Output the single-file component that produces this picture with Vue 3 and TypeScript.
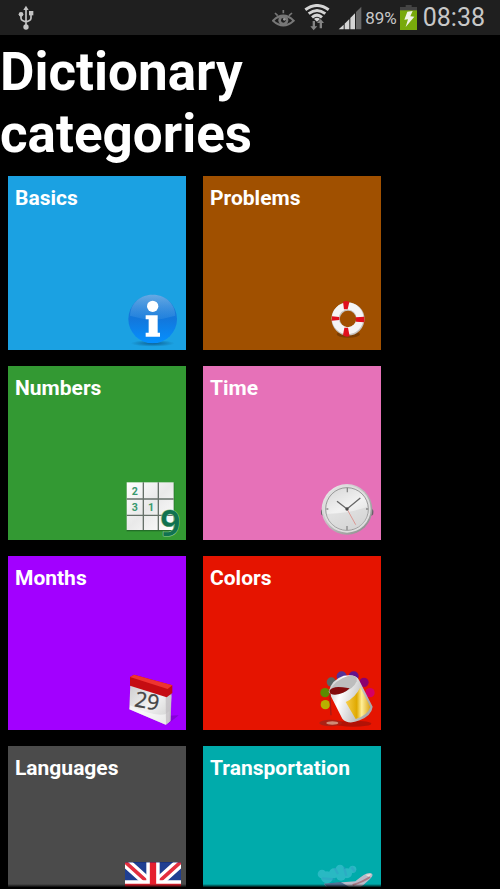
<script setup lang="ts">
interface Category {
  id: string
  label: string
  color: string
}

const categories: Category[] = [
  { id: 'basics', label: 'Basics', color: '#1ba1e2' },
  { id: 'problems', label: 'Problems', color: '#a05000' },
  { id: 'numbers', label: 'Numbers', color: '#339933' },
  { id: 'time', label: 'Time', color: '#e671b8' },
  { id: 'months', label: 'Months', color: '#a200ff' },
  { id: 'colors', label: 'Colors', color: '#e51400' },
  { id: 'languages', label: 'Languages', color: '#4b4b4b' },
  { id: 'transportation', label: 'Transportation', color: '#00abab' },
]
</script>

<template>
  <div class="screen">
    <header class="status">
      <svg class="usb" viewBox="0 0 48 75" aria-hidden="true">
        <g fill="none" stroke="#c4c4c4" stroke-width="5">
          <path d="M24 8V66M9 28V40Q9 45 15 47L24 51M39 24V40Q39 45 33 47L24 51" />
        </g>
        <g fill="#c4c4c4">
          <path d="M24 2L32 15H16Z" />
          <circle cx="9" cy="28" r="7" />
          <rect x="33" y="18" width="13" height="13" />
          <circle cx="24" cy="66" r="8" />
        </g>
      </svg>
      <div class="indicators">
        <svg class="eye" viewBox="0 0 69 60" aria-hidden="true">
          <g fill="none" stroke="#777" stroke-width="6">
            <path d="M3 38Q34 8 65 38Q34 66 3 38Z" />
            <path d="M9 15L17 23M34 6V16M60 15L51 23" stroke-width="5" />
          </g>
          <circle cx="34" cy="37" r="15" fill="#777" />
          <circle cx="34" cy="37" r="7" fill="#1f1f1f" />
          <circle cx="37" cy="34" r="4" fill="#999" />
        </svg>
        <svg class="wifi" viewBox="0 0 78 81" aria-hidden="true">
          <g fill="none" stroke="#d4d4d4" stroke-width="9">
            <path d="M4 17Q39 -8 74 17M14 29Q39 10 64 29M24 40Q39 27 54 40" />
          </g>
          <path d="M30 45Q39 38 48 45L39 53Z" fill="#d4d4d4" />
          <g fill="#858585">
            <path d="M26 51H33V67H40L29 79L19 67H26Z" />
            <path d="M47 73H54V57H60L50 45L39 57H47Z" />
          </g>
        </svg>
        <svg class="signal" viewBox="0 0 72 72" aria-hidden="true">
          <path d="M2 70L17 56V70Z" fill="#d4d4d4" />
          <path d="M20 53L34 39V70H20Z" fill="#d4d4d4" />
          <path d="M37 36L51 22V70H37Z" fill="#d4d4d4" />
          <path d="M54 18L70 2V70H54Z" fill="#666" />
        </svg>
        <span class="percent">89%</span>
        <svg class="battery" viewBox="0 0 51 75" aria-hidden="true">
          <rect x="17" width="18" height="7" fill="#444" />
          <rect y="6" width="51" height="69" fill="#444" />
          <rect y="16" width="51" height="59" fill="#78aa0b" />
          <path d="M22 20L38 18L31 34L43 35L17 66L24 43L13 44Z" fill="#f0f3e7" />
        </svg>
        <time class="clock">08:38</time>
      </div>
    </header>

    <main class="content">
      <h1>Dictionary categories</h1>
      <nav class="tiles" aria-label="Dictionary categories">
        <a
          v-for="c in categories"
          :key="c.id"
          class="tile"
          :href="'#' + c.id"
          :style="{ backgroundColor: c.color }"
        >
          <span class="label">{{ c.label }}</span>

          <svg class="icon" viewBox="0 0 198 195" aria-hidden="true">
            <g v-if="c.id === 'basics'">
              <defs>
                <linearGradient id="ball" x2="0" y2="1">
                  <stop offset="0" stop-color="#2079cf" />
                  <stop offset=".5" stop-color="#1277dc" />
                  <stop offset="1" stop-color="#0590ff" />
                </linearGradient>
                <linearGradient id="gloss" x2="0" y2="1">
                  <stop offset="0" stop-color="#8fc4ee" stop-opacity=".65" />
                  <stop offset="1" stop-color="#4c9fe6" stop-opacity=".25" />
                </linearGradient>
                <radialGradient id="shade">
                  <stop offset="0" stop-color="#08456f" stop-opacity=".7" />
                  <stop offset="1" stop-color="#08456f" stop-opacity="0" />
                </radialGradient>
              </defs>
              <ellipse cx="98" cy="175" rx="66" ry="10" fill="url(#shade)" />
              <circle cx="98" cy="102" r="73" fill="url(#ball)" />
              <path d="M30 92C34 8 162 8 166 92Q98 114 30 92Z" fill="url(#gloss)" />
              <circle cx="98" cy="64" r="17" fill="#fff" />
              <path d="M77 91H113V143H120V155H77V143H86V103H77Z" fill="#fff" />
            </g>

            <g v-else-if="c.id === 'problems'">
              <ellipse cx="100" cy="148" rx="35" ry="10" fill="#5e2d00" opacity=".55" />
              <circle cx="99" cy="102" r="37" fill="none" stroke="#c5c1bd" stroke-width="25" />
              <circle cx="98" cy="100" r="37" fill="none" stroke="#f5f5f5" stroke-width="21" />
              <g fill="#e00f1d">
                <path d="M84 50Q94 45 103 51L98 73H87Z" />
                <path d="M51 94L73 96V105L50 107Z" />
                <path d="M122 97L148 95V112L123 110Z" />
                <path d="M88 128H99L104 154Q93 158 84 151Z" />
              </g>
            </g>

            <g v-else-if="c.id === 'numbers'">
              <defs>
                <linearGradient id="cells" x2="1" y2="1">
                  <stop offset="0" stop-color="#fff" />
                  <stop offset=".5" stop-color="#e9e9e9" />
                  <stop offset="1" stop-color="#fff" />
                </linearGradient>
              </defs>
              <rect x="20" y="24" width="143" height="145" fill="#236f28" />
              <rect x="20" y="22" width="141" height="143" fill="url(#cells)" />
              <path d="M70 22V165M115 22V165M20 72H161M20 121H161" stroke="#667069" stroke-width="4" />
              <g class="digits" fill="#39996e">
                <text x="35" y="59" font-size="32">2</text>
                <text x="35" y="108" font-size="32">3</text>
                <text x="84" y="108" font-size="32">1</text>
              </g>
              <text class="nine" x="121" y="182" font-size="106" fill="#107250" stroke="#8fc79a" stroke-width="3" paint-order="stroke">9</text>
            </g>

            <g v-else-if="c.id === 'time'">
              <defs>
                <linearGradient id="rim" x2="1" y2="1">
                  <stop offset="0" stop-color="#f7f7f7" />
                  <stop offset=".5" stop-color="#bbb" />
                  <stop offset="1" stop-color="#858585" />
                </linearGradient>
                <linearGradient id="face" x2=".5" y2="1">
                  <stop offset="0" stop-color="#d5d5d5" />
                  <stop offset=".55" stop-color="#f2f2f2" />
                  <stop offset="1" stop-color="#ddd" />
                </linearGradient>
              </defs>
              <rect x="18" y="101" width="157" height="21" rx="8" fill="#686068" />
              <circle cx="96" cy="103" r="76" fill="url(#rim)" />
              <circle cx="96" cy="102" r="71" fill="#dedede" />
              <circle cx="96" cy="102" r="64" fill="url(#face)" stroke="#999" stroke-width="3" />
              <path d="M34 116Q95 118 158 95Q163 160 96 165Q43 160 34 116Z" fill="#d0d0d0" opacity=".5" />
              <path d="M97 38V52M96 153V165M34 102H40M153 102H159" stroke="#888" stroke-width="4" />
              <path d="M96 102L122 149" stroke="#dc9792" stroke-width="3" />
              <path d="M66 79L96 102L136 69" fill="none" stroke="#666" stroke-width="4" />
              <circle cx="96" cy="102" r="5" fill="#484848" />
            </g>

            <g v-else-if="c.id === 'months'">
              <defs>
                <linearGradient id="paper" x2="1" y2="1">
                  <stop offset="0" stop-color="#ccc" />
                  <stop offset=".5" stop-color="#f2f2f2" />
                  <stop offset="1" stop-color="#cacaca" />
                </linearGradient>
              </defs>
              <path d="M145 152L176 151L145 176Z" fill="#7200bd" opacity=".6" />
              <path d="M31 56L144 88L154 91L151 168L137 179L28 133Z" fill="url(#paper)" />
              <path d="M31 121Q91 154 136 148L148 138V171L137 179L28 133Z" fill="#fff" opacity=".55" />
              <path d="M137 91L155 83L152 168L138 179Z" fill="#bdb9bd" opacity=".7" />
              <path d="M30 36L42 29L157 61V84L140 97L30 62Z" fill="#c50c12" />
              <path d="M30 36L42 29L157 61L143 72Z" fill="#ee3430" />
              <text class="date" x="41" y="124" font-size="64" fill="#454545" stroke="#454545" stroke-width="1" transform="rotate(10 41 124)">29</text>
            </g>

            <g v-else-if="c.id === 'colors'">
              <defs>
                <linearGradient id="can" x2="1" y2=".3">
                  <stop offset="0" stop-color="#bbb" />
                  <stop offset=".35" stop-color="#fff" />
                  <stop offset="1" stop-color="#aaa" />
                </linearGradient>
                <linearGradient id="gold" x2="1">
                  <stop offset="0" stop-color="#f8cf4c" />
                  <stop offset=".45" stop-color="#dfa900" />
                  <stop offset=".65" stop-color="#fff099" />
                  <stop offset="1" stop-color="#d9a315" />
                </linearGradient>
              </defs>
              <ellipse cx="115" cy="176" rx="54" ry="9" fill="#971109" opacity=".65" />
              <ellipse cx="47" cy="174" rx="34" ry="10" fill="#aa2114" />
              <ellipse cx="52" cy="174" rx="18" ry="5" fill="#cf8c77" />
              <circle cx="31" cy="119" r="14" fill="#b8b000" />
              <circle cx="30" cy="83" r="14" fill="#5d8c00" />
              <circle cx="49" cy="51" r="14" fill="#5b6664" />
              <circle cx="80" cy="34" r="15" fill="#553296" />
              <circle cx="116" cy="34" r="15" fill="#64128a" />
              <circle cx="147" cy="52" r="14" fill="#8b006e" />
              <circle cx="165" cy="83" r="14" fill="#d40065" />
              <path d="M41 80Q49 44 86 32Q124 26 132 45L173 125Q170 151 134 166Q99 181 82 161Z" fill="url(#can)" />
              <path d="M44 79Q59 44 99 33Q130 29 125 49Q117 70 84 83Q49 96 44 79Z" fill="#bdbdbd" />
              <path d="M43 77Q54 62 83 67L104 70Q86 88 60 89Q44 89 43 77Z" fill="#830b0c" />
              <path d="M92 111Q120 100 136 67L166 126Q158 151 122 162Z" fill="url(#gold)" />
              <path d="M45 83Q46 117 48 151" fill="none" stroke="#a51c15" stroke-width="4" />
            </g>

            <g v-else-if="c.id === 'languages'">
              <defs>
                <clipPath id="flag"><rect x="15" y="21" width="168" height="150" /></clipPath>
              </defs>
              <g clip-path="url(#flag)">
                <rect x="15" y="21" width="168" height="150" fill="#203f91" />
                <path d="M9 15L189 177M189 15L9 177" stroke="#fff" stroke-width="30" />
                <path d="M9 15L189 177M189 15L9 177" stroke="#e32e3e" stroke-width="11" />
                <path d="M99 21V171M15 96H183" stroke="#fff" stroke-width="40" />
                <path d="M99 21V171M15 96H183" stroke="#e51f2d" stroke-width="19" />
                <path d="M15 22H183" stroke="#10286d" stroke-width="3" opacity=".5" />
              </g>
            </g>

            <g v-else>
              <g fill="#5ccce0" opacity=".45">
                <circle cx="21" cy="57" r="13" />
                <circle cx="36" cy="67" r="18" />
                <circle cx="57" cy="55" r="15" />
                <circle cx="75" cy="42" r="13" />
                <circle cx="78" cy="62" r="15" />
                <circle cx="96" cy="55" r="15" />
                <circle cx="113" cy="43" r="11" />
              </g>
              <path d="M59 39L69 57M87 36L94 63M109 36L120 50M21 70L61 73" stroke="#319bc7" stroke-width="7" opacity=".4" />
              <path d="M27 86L121 79Q153 51 166 54Q180 58 165 72Q143 94 119 107L49 119Z" fill="#b9bac9" />
              <path d="M27 86L77 81L102 95L46 107Z" fill="#355f88" opacity=".8" />
              <path d="M113 90Q145 80 165 66" fill="none" stroke="#a97884" stroke-width="6" />
              <path d="M151 59L169 57L162 65Z" fill="#eee1d8" />
            </g>
          </svg>
        </a>
      </nav>
    </main>
  </div>
</template>

<style>
body {
  margin: 0;
  background: #000;
}
</style>

<style scoped>
.screen {
  position: relative;
  display: flex;
  flex-direction: column;
  height: 100vh;
  background: #000;
  color: #fff;
  font-family: Roboto, "Liberation Sans", sans-serif;
}

.screen::after {
  content: "";
  position: absolute;
  inset: auto 0 0;
  height: 5px;
  background: linear-gradient(transparent, #000 70%);
  pointer-events: none;
}

.status {
  display: flex;
  flex: none;
  align-items: center;
  justify-content: space-between;
  height: 35px;
  padding: 0 15px 0 18px;
  background: #1f1f1f;
  color: #c8c8c8;
}

.usb {
  width: 16px;
  height: 25px;
}

.indicators {
  display: flex;
  align-items: center;
}

.eye {
  width: 23px;
  height: 20px;
  margin-right: 9px;
}

.wifi {
  width: 26px;
  height: 27px;
  margin-right: 8px;
}

.signal {
  width: 24px;
  height: 24px;
  margin-right: 3px;
}

.percent {
  margin-right: 3px;
  font-size: 17px;
}

.battery {
  width: 17px;
  height: 25px;
  margin-right: 6px;
}

.clock {
  font-size: 25px;
  line-height: 35px;
}

.content {
  flex: 1;
  min-height: 0;
  overflow-y: auto;
  scrollbar-width: none;
}

h1 {
  max-width: 380px;
  margin: 0;
  padding: 6px 0 11px;
  font-size: 53px;
  font-weight: 700;
  line-height: 62px;
}

.tiles {
  display: grid;
  grid-template-columns: repeat(auto-fill, 178px);
  gap: 16px 17px;
  max-width: 380px;
  padding: 0 8px 16px;
}

.tile {
  display: flex;
  flex-direction: column;
  justify-content: space-between;
  height: 174px;
  color: #fff;
  text-decoration: none;
}

.label {
  padding: 10px 7px 0;
  font-size: 21px;
  font-weight: 700;
  line-height: 24px;
}

.icon {
  align-self: flex-end;
  width: 66px;
  height: 65px;
  overflow: visible;
}

.digits {
  font-family: Roboto, sans-serif;
  font-weight: 700;
}

.nine {
  font-family: "Noto Sans", sans-serif;
  font-weight: 600;
}

.date {
  font-family: "Open Sans", sans-serif;
}
</style>
